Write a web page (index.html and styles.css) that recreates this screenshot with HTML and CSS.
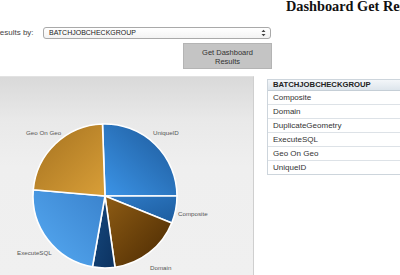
FILE: index.html
```html
<!DOCTYPE html>
<html>
<head>
<meta charset="utf-8">
<link rel="stylesheet" href="styles.css">
</head>
<body>
<div class="page">
  <h3 class="title">Dashboard Get Results</h3>
  <div class="filter">
    <span class="filter-label">Results by:</span>
    <div class="select">
      <span class="select-text">BATCHJOBCHECKGROUP</span>
      <svg class="select-arrows" width="5" height="8" viewBox="0 0 5 8"><path d="M0.5 3 L2.5 0.8 L4.5 3 Z M0.5 5 L2.5 7.2 L4.5 5 Z" fill="#444"/></svg>
    </div>
  </div>
  <div class="actions">
    <div class="btn">Get Dashboard<br>Results</div>
  </div>
  <div class="main">
    <div class="panel">
      <svg class="pie" width="253" height="199" viewBox="0 0 253 199">
        <defs>
          <linearGradient id="gU" x1="1" y1="0" x2="0" y2="1">
            <stop offset="0" stop-color="#1c5797"/>
            <stop offset="1" stop-color="#3c95e8"/>
          </linearGradient>
          <linearGradient id="gC" x1="0" y1="0" x2="1" y2="1">
            <stop offset="0" stop-color="#2f7cc8"/>
            <stop offset="1" stop-color="#1d5c9e"/>
          </linearGradient>
          <linearGradient id="gD" x1="0" y1="0" x2="1" y2="1">
            <stop offset="0" stop-color="#8e5c14"/>
            <stop offset="1" stop-color="#4a2902"/>
          </linearGradient>
          <linearGradient id="gG" x1="0" y1="0" x2="1" y2="1">
            <stop offset="0" stop-color="#164a80"/>
            <stop offset="1" stop-color="#0c3260"/>
          </linearGradient>
          <linearGradient id="gE" x1="1" y1="0" x2="0" y2="1">
            <stop offset="0" stop-color="#3a82cc"/>
            <stop offset="1" stop-color="#56abf4"/>
          </linearGradient>
          <linearGradient id="gO" x1="0" y1="0" x2="1" y2="1">
            <stop offset="0" stop-color="#a4711f"/>
            <stop offset="1" stop-color="#d99f38"/>
          </linearGradient>
        </defs>
        <g stroke="#fff" stroke-width="1.6" stroke-linejoin="round">
          <path d="M105 119 L102.49 47.04 A72 72 0 0 1 177 119 Z" fill="url(#gU)"/>
          <path d="M105 119 L177 119 A72 72 0 0 1 171.76 145.97 Z" fill="url(#gC)"/>
          <path d="M105 119 L171.76 145.97 A72 72 0 0 1 115.02 190.30 Z" fill="url(#gD)"/>
          <path d="M105 119 L115.02 190.30 A72 72 0 0 1 92.50 189.91 Z" fill="url(#gG)"/>
          <path d="M105 119 L92.50 189.91 A72 72 0 0 1 33.28 112.72 Z" fill="url(#gE)"/>
          <path d="M105 119 L33.28 112.72 A72 72 0 0 1 102.49 47.04 Z" fill="url(#gO)"/>
        </g>
        <g class="pie-labels">
          <text x="26" y="57.5">Geo On Geo</text>
          <text x="153" y="57.5">UniqueID</text>
          <text x="178" y="138.5">Composite</text>
          <text x="17" y="177.5">ExecuteSQL</text>
          <text x="150" y="192.5">Domain</text>
        </g>
      </svg>
    </div>
    <div class="grid">
      <div class="grid-head">BATCHJOBCHECKGROUP</div>
      <div class="grid-row">Composite</div>
      <div class="grid-row">Domain</div>
      <div class="grid-row">DuplicateGeometry</div>
      <div class="grid-row">ExecuteSQL</div>
      <div class="grid-row">Geo On Geo</div>
      <div class="grid-row">UniqueID</div>
    </div>
  </div>
</div>
</body>
</html>
```

FILE: styles.css
```css
html, body {
  margin: 0;
  padding: 0;
  background: #fff;
  overflow: hidden;
  width: 400px;
  height: 275px;
}

.page {
  margin-left: -6px;
  width: 440px;
  font-family: "Liberation Sans", Arial, sans-serif;
  color: #333;
}

.title {
  margin: -2px 0 0 0;
  padding-left: 292px;
  font-family: "Liberation Serif", "Times New Roman", serif;
  font-weight: bold;
  font-size: 14.3px;
  line-height: 16px;
  white-space: nowrap;
  color: #111;
}

.filter {
  display: flex;
  align-items: center;
  margin-top: 13px;
  height: 12px;
}

.filter-label {
  width: 49px;
  font-size: 8px;
  line-height: 10px;
  color: #444;
  white-space: nowrap;
  margin-top: -1px;
}

.select {
  box-sizing: border-box;
  width: 228px;
  height: 12px;
  border: 1px solid #a9a9a9;
  border-radius: 3px;
  background: linear-gradient(#ffffff, #f3f3f3);
  display: flex;
  align-items: center;
  justify-content: space-between;
  padding: 0 4px 0 5px;
}

.select-text {
  font-size: 7px;
  color: #222;
  line-height: 10px;
}

.select-arrows {
  display: block;
}

.actions {
  margin-top: 4px;
  padding-left: 189px;
}

.btn {
  box-sizing: border-box;
  width: 89px;
  height: 26px;
  background: #c4c4c4;
  border: 1px solid #b4b4b4;
  font-size: 7.5px;
  line-height: 9.5px;
  text-align: center;
  color: #333;
  padding-top: 3.5px;
}

.main {
  display: flex;
  align-items: flex-start;
  margin-top: 7px;
}

.panel {
  box-sizing: border-box;
  width: 260px;
  height: 200px;
  border-right: 1px solid #cfcfcf;
  border-top: 1px solid #e2e2e2;
  background: linear-gradient(to bottom, #d9d9d9 0%, #e9e9e9 22%, #efefef 45%, #f0f0f0 100%);
}

.pie {
  display: block;
  margin-left: 6px;
}

.pie-labels text {
  font-family: "Liberation Sans", Arial, sans-serif;
  font-size: 6.2px;
  fill: #555;
}

.grid {
  margin-left: 13px;
  margin-top: 3px;
  width: 150px;
  border: 1px solid #cdd5dc;
  border-right: none;
  font-size: 8px;
}

.grid-head {
  height: 10px;
  line-height: 10px;
  padding-left: 5px;
  font-weight: bold;
  font-size: 7.7px;
  color: #222;
  background: linear-gradient(#f3f6f9, #dde5ec);
  border-bottom: 1px solid #c5ced6;
}

.grid-row {
  height: 13px;
  line-height: 13px;
  padding-left: 5px;
  color: #333;
  background: #fff;
  border-bottom: 1px solid #dde2e7;
}

.grid-row:last-child {
  border-bottom: none;
}
```
